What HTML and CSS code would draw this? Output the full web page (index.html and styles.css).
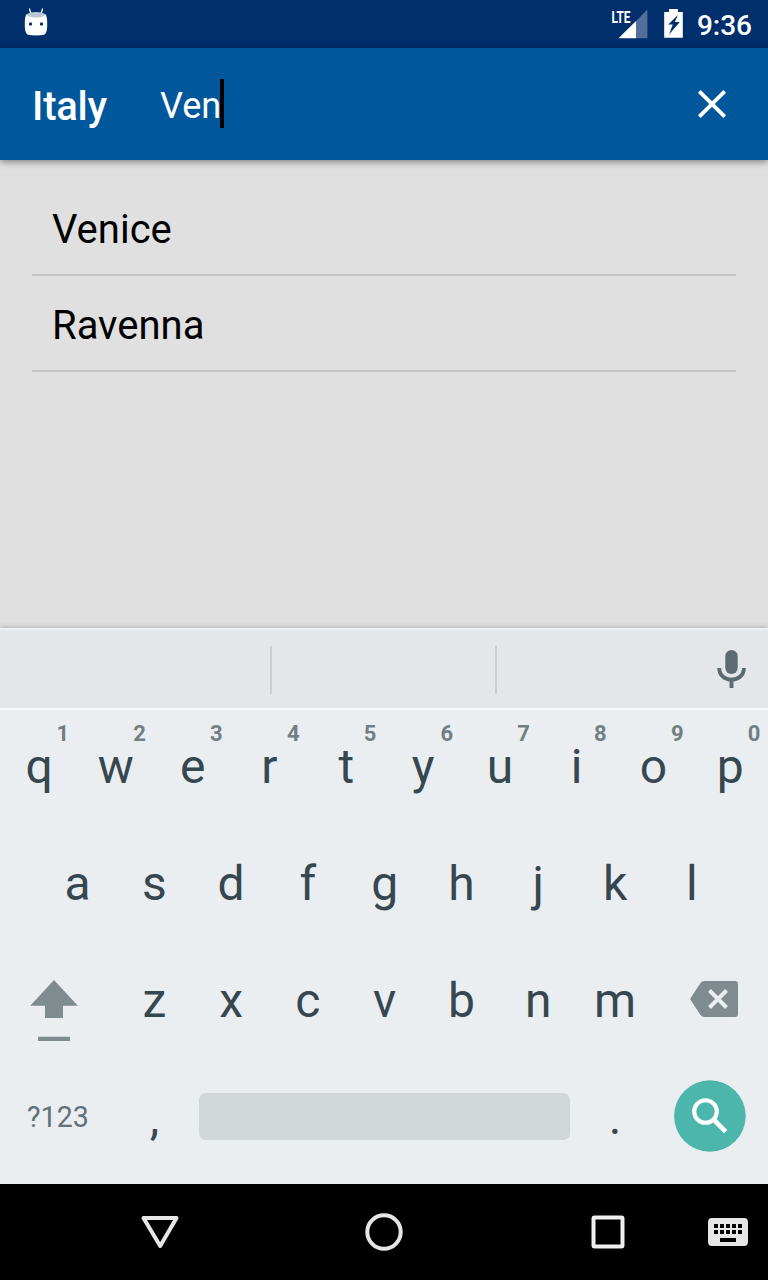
FILE: index.html
```html
<!DOCTYPE html>
<html lang="en">
<head>
<meta charset="utf-8">
<title>City search</title>
<link rel="stylesheet" href="styles.css">
</head>
<body>
<div class="screen">
  <div class="status">
    <svg class="droid" width="24" height="30" viewBox="24 7 24 30">
      <path d="M29.500 9 31 14M42.500 9 41 14" stroke="#fff" stroke-width="1.300" stroke-linecap="round"/>
      <path d="M26.300 14.500Q36 11.500 45.700 14.500Q47.500 17 47.200 27Q46.800 33.500 44 34.700Q36 36.200 28 34.700Q25.200 33.500 24.800 27Q24.500 17 26.300 14.500Z" fill="#fff"/>
      <ellipse cx="36" cy="14.800" rx="9.300" ry="2.700" fill="#b9c6d8"/>
      <rect x="29" y="22.500" width="3" height="3" rx=".8" fill="#002f6c"/><rect x="40" y="22.500" width="3" height="3" rx=".8" fill="#002f6c"/>
    </svg>
    <svg class="signal" width="38" height="32" viewBox="611 8 38 32">
      <text class="lte" x="611.500" y="22.600" textLength="19" lengthAdjust="spacingAndGlyphs">LTE</text>
      <path d="M618.500 38.300 636 20.900V38.300Z" fill="#fff"/>
      <path d="M636 20.900 647.400 9.500V38.300H636Z" fill="#526f9a"/>
    </svg>
    <svg class="battery" width="20" height="30" viewBox="664 8 20 30">
      <path d="M669 9H678V12H682.800V37.800H664.200V12H669Z" fill="#fff"/>
      <path d="M678 15 668.200 24.500H672.800L669 34.500 679.800 22H674.800Z" fill="#002f6c"/>
    </svg>
    <span class="time">9:36</span>
  </div>
  <div class="appbar">
    <span class="country">Italy</span>
    <span class="query">Ven</span><span class="caret"></span>
    <svg class="close" width="32" height="32" viewBox="0 0 32 32"><path d="M3.300 3.300 28.700 28.700M28.700 3.300 3.300 28.700" stroke="#fff" stroke-width="3.900"/></svg>
  </div>
  <div class="results">
    <div class="result">Venice</div>
    <div class="result">Ravenna</div>
  </div>
  <div class="suggest">
    <span class="slot first"></span><span class="slot"></span>
    <svg class="mic" width="30" height="40" viewBox="716 649 30 40">
      <rect x="725.300" y="650" width="12.400" height="24" rx="6.200" fill="#5c6b71"/>
      <path d="M719.200 668C719.200 683.700 743.900 683.700 743.900 668M731.500 679V688" fill="none" stroke="#5c6b71" stroke-width="3.900"/>
    </svg>
  </div>
  <div class="keyboard">
    <div class="row">
      <span class="key">q<b>1</b></span><span class="key">w<b>2</b></span><span class="key">e<b>3</b></span><span class="key">r<b>4</b></span><span class="key">t<b>5</b></span><span class="key">y<b>6</b></span><span class="key">u<b>7</b></span><span class="key">i<b>8</b></span><span class="key">o<b>9</b></span><span class="key">p<b>0</b></span>
    </div>
    <div class="row">
      <span class="key">a</span><span class="key">s</span><span class="key">d</span><span class="key">f</span><span class="key">g</span><span class="key">h</span><span class="key">j</span><span class="key">k</span><span class="key">l</span>
    </div>
    <div class="row">
      <span class="wide shift"><svg width="48" height="64" viewBox="30 979 48 64"><path d="M54 980 77.800 1005.700H63V1018H45V1005.700H30.200ZM38 1036.800H70V1041H38Z" fill="#808b8f"/></svg></span>
      <span class="key">z</span><span class="key">x</span><span class="key">c</span><span class="key">v</span><span class="key">b</span><span class="key">n</span><span class="key">m</span>
      <span class="wide erase"><svg width="48" height="38" viewBox="690 980 48 38"><path d="M690 999 700.500 983Q702 981 704.500 981H735Q738 981 738 984V1014Q738 1017 735 1017H704.500Q702 1017 700.500 1015Z" fill="#808b8f"/><path d="M709.500 990.500 726.500 1007.500M726.500 990.500 709.500 1007.500" stroke="#ebeef1" stroke-width="3.900"/></svg></span>
    </div>
    <div class="row">
      <span class="wide symbols">?123</span>
      <span class="key">,</span>
      <span class="space"></span>
      <span class="key">.</span>
      <span class="wide go"><svg width="72" height="72" viewBox="674 1080 72 72"><circle cx="709.900" cy="1116" r="35.800" fill="#4db6ac"/><circle cx="705.500" cy="1111.500" r="11.300" fill="none" stroke="#fff" stroke-width="4.100"/><path d="M713.500 1119.500 725.700 1131.700" stroke="#fff" stroke-width="4.600"/></svg></span>
    </div>
  </div>
  <div class="nav">
    <svg class="back" width="40" height="36" viewBox="140 1214 40 36"><path d="M143.500 1218H176.500L160.200 1246Z" fill="none" stroke="#e6e6e6" stroke-width="4" stroke-linejoin="round"/></svg>
    <svg class="home" width="40" height="40" viewBox="0 0 40 40"><circle cx="20" cy="20" r="16.700" fill="none" stroke="#e6e6e6" stroke-width="4"/></svg>
    <svg class="recent" width="34" height="34" viewBox="0 0 34 34"><rect x="2.500" y="2.500" width="29" height="29" rx="1" fill="none" stroke="#f0f0f0" stroke-width="4"/></svg>
    <svg class="ime" width="40" height="28" viewBox="0 0 40 28"><rect width="40" height="28" rx="4" fill="#e6e6e6"/><path d="M6 8H34M6 14H34" stroke="#000" stroke-width="4" stroke-dasharray="4 2"/><path d="M12 20H28V24H12Z"/></svg>
  </div>
</div>
</body>
</html>
```
FILE: styles.css
```css
body {
  margin: 0;
  font-family: Roboto, "Liberation Sans", sans-serif;
}
svg { display: block; flex: none; }
.screen {
  width: 768px;
  height: 1280px;
  display: flex;
  flex-direction: column;
  overflow: hidden;
  background: #e0e0e0;
}
.status {
  height: 48px;
  flex: none;
  box-sizing: border-box;
  padding: 0 16px 0 24px;
  display: flex;
  align-items: flex-start;
  background: #002f6c;
  color: #fff;
}
.droid { margin-top: 7px; }
.signal { margin: 8px 15px 0 auto; }
.lte { font: bold 16.500px Roboto, sans-serif; fill: #fff; }
.battery { margin-top: 8px; }
.time {
  margin-left: 13px;
  font-size: 28px;
  font-weight: 500;
  line-height: 52px;
}
.appbar {
  height: 112px;
  flex: none;
  box-sizing: border-box;
  padding: 0 40px 0 32px;
  display: flex;
  align-items: center;
  background: #01579b;
  color: #fff;
  box-shadow: 0 2px 7px rgba(0, 0, 0, .42);
  z-index: 1;
}
.country {
  width: 128px;
  font-size: 40px;
  font-weight: 500;
  line-height: 48px;
  padding-top: 6px;
  letter-spacing: -.2px;
}
.query {
  font-size: 36px;
  line-height: 48px;
  padding-top: 3px;
}
.caret {
  width: 4px;
  height: 49px;
  margin: 0 0 2px -1px;
  background: #000;
}
.close { margin-left: auto; }
.results { flex: 1; padding: 20px 32px 0; }
.result {
  height: 94px;
  padding-left: 20px;
  border-bottom: 2px solid #c5c5c5;
  font-size: 40px;
  line-height: 100px;
  color: #000;
}
.suggest {
  height: 80px;
  flex: none;
  box-sizing: border-box;
  padding-right: 22px;
  display: flex;
  align-items: center;
  background: #e3e7ea;
  border-top: 2px solid #eff1f3;
  box-shadow: 0 -1px 5px rgba(0, 0, 0, .2);
}
.slot {
  box-sizing: border-box;
  width: 225px;
  height: 48px;
  margin-top: 2px;
  border-right: 2px solid #cacfd2;
}
.slot.first { width: 272px; }
.mic { margin-left: auto; }
.keyboard {
  height: 476px;
  flex: none;
  background: #ebeef1;
  box-shadow: inset 0 2px #f7f8f9;
  color: #37474f;
}
.row { height: 117px; display: flex; justify-content: center; }
.key {
  position: relative;
  box-sizing: border-box;
  width: 76.800px;
  padding-left: 1.400px;
  text-align: center;
  font-size: 48px;
  line-height: 117px;
}
.key b {
  position: absolute;
  right: 7.700px;
  top: 13px;
  font-size: 22px;
  line-height: 26px;
  color: #737e83;
}
.wide { width: 115.200px; display: flex; }
.shift { padding: 37px 0 0 30px; width: 85.200px; }
.erase { padding: 38px 0 0 37.200px; width: 78px; }
.symbols {
  box-sizing: border-box;
  padding-left: 27px;
  font-size: 28.600px;
  line-height: 117px;
  color: #62717a;
}
.space {
  width: 371px;
  height: 47px;
  margin: 34px 6px 0 7px;
  border-radius: 7px;
  background: #d1d6d9;
}
.go { padding: 21px 0 0 21px; width: 94px; }
.nav {
  height: 96px;
  flex: none;
  box-sizing: border-box;
  padding: 0 20px 0 140px;
  display: flex;
  align-items: center;
  background: #000;
}
.home { margin-left: 184px; }
.recent { margin-left: 187px; }
.ime { margin-left: auto; }
```
